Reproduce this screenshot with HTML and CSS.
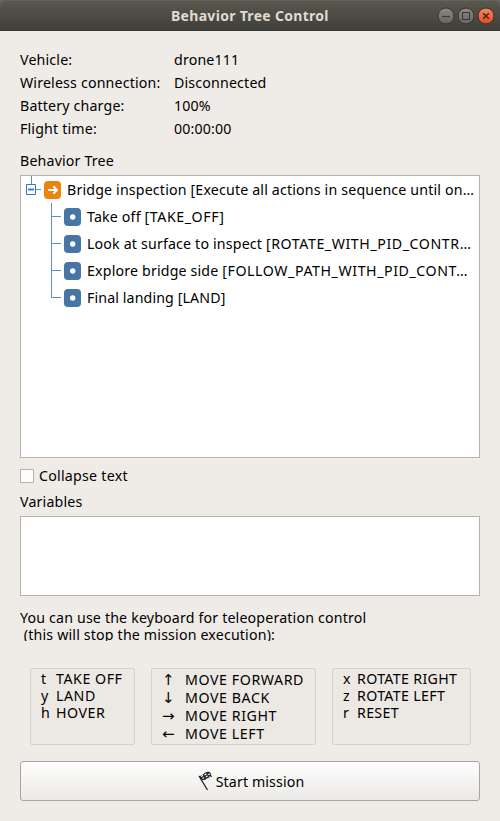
FILE: index.html
```html
<!DOCTYPE html>
<html lang="en">
<head>
<meta charset="utf-8">
<title>Behavior Tree Control</title>
<link rel="stylesheet" href="styles.css">
</head>
<body>
<div class="window">
  <header class="titlebar">
    <h1 class="title">Behavior Tree Control</h1>
    <div class="controls">
      <svg class="control" viewBox="0 0 18 18"><circle class="ring" cx="9" cy="9" r="8"/><path class="glyph" d="M5 9.5h8"/></svg>
      <svg class="control" viewBox="0 0 18 18"><circle class="ring" cx="9" cy="9" r="8"/><path class="glyph" d="M5.5 5.5h7v7h-7z"/></svg>
      <svg class="control close" viewBox="0 0 18 18"><defs><linearGradient id="red" x2="0" y2="1"><stop offset="0" stop-color="#f58a64"/><stop offset="1" stop-color="#e04a1c"/></linearGradient><linearGradient id="grey" x2="0" y2="1"><stop offset="0" stop-color="#8b8983"/><stop offset="1" stop-color="#66645e"/></linearGradient></defs><circle class="ring" cx="9" cy="9" r="8"/><path class="glyph" d="M6.2 6.2l5.6 5.6M11.8 6.2l-5.6 5.6"/></svg>
    </div>
  </header>
  <main class="content">
    <dl class="info">
      <dt>Vehicle:</dt><dd>drone111</dd>
      <dt>Wireless connection:</dt><dd>Disconnected</dd>
      <dt>Battery charge:</dt><dd>100%</dd>
      <dt>Flight time:</dt><dd>00:00:00</dd>
    </dl>
    <div class="label tree-label">Behavior Tree</div>
    <div class="tree">
      <div class="row root">
        <svg class="branch" width="17" height="27" viewBox="0 0 17 27"><path class="line" d="M5.5 0v8M10 13.5h5"/><path class="toggle" d="M.5 8.5h9v10h-9z"/><path class="minus" d="M2 13.5h6"/></svg>
        <svg class="icon" viewBox="0 0 17 18"><rect class="orange" width="17" height="18" rx="4"/><path class="arrow" d="M4 9h9M9.3 5.3L13 9l-3.7 3.7"/></svg>
        <span class="text">Bridge inspection [Execute all actions in sequence until on…</span>
      </div>
      <div class="row">
        <svg class="branch" width="13" height="27" viewBox="0 0 13 27"><path class="line" d="M.5 0v27M0 13.5h10"/></svg>
        <svg class="icon" viewBox="0 0 17 18"><rect class="blue" width="17" height="18" rx="4"/><circle cx="8.7" cy="9" r="2.7" fill="#fff"/></svg>
        <span class="text">Take off <span class="caps">[TAKE_OFF]</span></span>
      </div>
      <div class="row">
        <svg class="branch" width="13" height="27" viewBox="0 0 13 27"><path class="line" d="M.5 0v27M0 13.5h10"/></svg>
        <svg class="icon" viewBox="0 0 17 18"><rect class="blue" width="17" height="18" rx="4"/><circle cx="8.7" cy="9" r="2.7" fill="#fff"/></svg>
        <span class="text">Look at surface to inspect <span class="caps">[ROTATE_WITH_PID_CONTR…</span></span>
      </div>
      <div class="row">
        <svg class="branch" width="13" height="27" viewBox="0 0 13 27"><path class="line" d="M.5 0v27M0 13.5h10"/></svg>
        <svg class="icon" viewBox="0 0 17 18"><rect class="blue" width="17" height="18" rx="4"/><circle cx="8.7" cy="9" r="2.7" fill="#fff"/></svg>
        <span class="text">Explore bridge side <span class="caps">[FOLLOW_PATH_WITH_PID_CONT…</span></span>
      </div>
      <div class="row">
        <svg class="branch" width="13" height="27" viewBox="0 0 13 27"><path class="line" d="M.5 0v13.5h9.5"/></svg>
        <svg class="icon" viewBox="0 0 17 18"><rect class="blue" width="17" height="18" rx="4"/><circle cx="8.7" cy="9" r="2.7" fill="#fff"/></svg>
        <span class="text landing">Final landing [LAND]</span>
      </div>
    </div>
    <label class="check"><span class="box"></span>Collapse text</label>
    <div class="label">Variables</div>
    <div class="variables"></div>
    <p class="hint">You can use the keyboard for teleoperation control<br>&nbsp;(this will stop the mission execution):</p>
    <div class="keys">
      <div class="group takeoff">
        <span>t</span><span>TAKE OFF</span>
        <span>y</span><span>LAND</span>
        <span>h</span><span>HOVER</span>
      </div>
      <div class="group move">
        <span class="key">↑</span><span>MOVE FORWARD</span>
        <span class="key">↓</span><span>MOVE BACK</span>
        <span class="key">→</span><span>MOVE RIGHT</span>
        <span class="key">←</span><span>MOVE LEFT</span>
      </div>
      <div class="group rotate">
        <span>x</span><span>ROTATE RIGHT</span>
        <span>z</span><span>ROTATE LEFT</span>
        <span>r</span><span>RESET</span>
      </div>
    </div>
    <button class="start" type="button">
      <svg class="flag" viewBox="0 0 15 20"><path d="M1 5l8.5 14" stroke="#111" stroke-width="1.2" fill="none"/><path d="M1 5Q4 5 6 2.5T12 1l2 5q-3-.5-5 1.5T4 9z" fill="#222"/><path d="M3 5.5l2-1M6.5 4l2-1.3M10 3.5l2-.5M4.5 7.5l1.500-1M8 6l1.500-1.200M11.500 5.500l1-.3" stroke="#fff" stroke-width="1.2"/></svg>
      <span>Start mission</span>
    </button>
  </main>
</div>
</body>
</html>
```
FILE: styles.css
```css
* { box-sizing: border-box; }
body {
  margin: 0;
  background: #66665f;
  font: 14.2px/17px "Noto Sans", "Open Sans", sans-serif;
  letter-spacing: 0.17px;
  color: #000;
}
.window { height: 821px; }
.titlebar {
  height: 31px;
  display: grid;
  grid-template-columns: 1fr auto;
  align-items: center;
  padding: 0 5px 0 0;
  border-top: 1px solid #65645c;
  border-bottom: 1px solid #38372f;
  border-radius: 6px 6px 0 0;
  background: linear-gradient(#59574e, #403f3a);
}
.title {
  margin: 0 0 0 171px;
  font-size: 14px;
  font-weight: 700;
  letter-spacing: 0.3px;
  color: #dfdbd2;
  white-space: nowrap;
}
.controls { display: flex; gap: 2px; padding-top: 1px; }
.control { width: 18px; height: 18px; display: block; }
.ring { fill: url(#grey); stroke: #35342f; }
.close .ring { fill: url(#red); }
.glyph { fill: none; stroke: #3a3935; stroke-width: 1.1; }
.close .glyph { stroke: #43200f; stroke-width: 1.4; }
.content {
  height: 790px;
  padding: 17px 20px 0;
  background: #efebe7;
}
.info {
  display: grid;
  grid-template-columns: 154px 1fr;
  grid-auto-rows: 23px;
  margin: 0;
  line-height: 23px;
}
.info dd { margin: 0; }
.label { height: 17px; white-space: nowrap; }
.tree-label { margin: 12px 0 6px; }
.tree, .variables { border: 1px solid #b6b2ae; background: #fff; }
.tree { height: 283px; }
.row {
  display: flex;
  align-items: center;
  height: 27px;
  padding-left: 30px;
}
.row.root { padding-left: 5px; }
.row .icon { width: 17px; height: 18px; margin-right: 6px; flex: none; }
.root .icon { margin-left: 1px; }
.branch { flex: none; }
.line { fill: none; stroke: #5b8fcc; }
.toggle { fill: #fff; stroke: #3f73ab; }
.minus { stroke: #3c7fd0; stroke-width: 2; }
.orange { fill: #ec8409; }
.blue { fill: #4675a6; }
.arrow { fill: none; stroke: #fff; stroke-width: 2; }
.text { white-space: nowrap; }
.caps { letter-spacing: 0.57px; }
.landing { letter-spacing: 0.12px; }
.check {
  display: flex;
  align-items: center;
  gap: 5px;
  height: 17px;
  margin: 9px 0;
  letter-spacing: 0.25px;
}
.box { width: 14px; height: 14px; border: 1px solid #b6b2ae; background: #fff; }
.variables { height: 80px; margin-top: 6px; }
.hint { margin: 13px 0 0; height: 32px; overflow: hidden; white-space: nowrap; }
.keys { display: flex; gap: 16px; margin: 27px 0 0 10px; }
.group {
  flex: none;
  display: grid;
  grid-auto-rows: 17px;
  align-content: start;
  height: 77px;
  padding: 1px 10px 0;
  border: 1px solid #d5d1cd;
  border-radius: 2px;
  background: #ece8e3;
  white-space: nowrap;
}
.takeoff { width: 105px; grid-template-columns: 15px 1fr; letter-spacing: 0.55px; }
.move { width: 165px; padding-top: 2px; grid-template-columns: 23px 1fr; grid-auto-rows: 18px; line-height: 18px; letter-spacing: 0.58px; }
.key { font-family: "DejaVu Sans", sans-serif; font-size: 15px; }
.rotate { width: 139px; grid-template-columns: 14px 1fr; letter-spacing: 0.33px; }
.start {
  display: flex;
  align-items: center;
  justify-content: center;
  gap: 3px;
  width: 460px;
  height: 40px;
  margin-top: 16px;
  padding: 0 0 0 2px;
  border: 1px solid #aaa5a1;
  border-radius: 3px;
  background: linear-gradient(#fefefe, #ebe9e7);
  font: inherit;
  letter-spacing: 0.12px;
  color: inherit;
}
.flag { width: 15px; height: 20px; }
```
